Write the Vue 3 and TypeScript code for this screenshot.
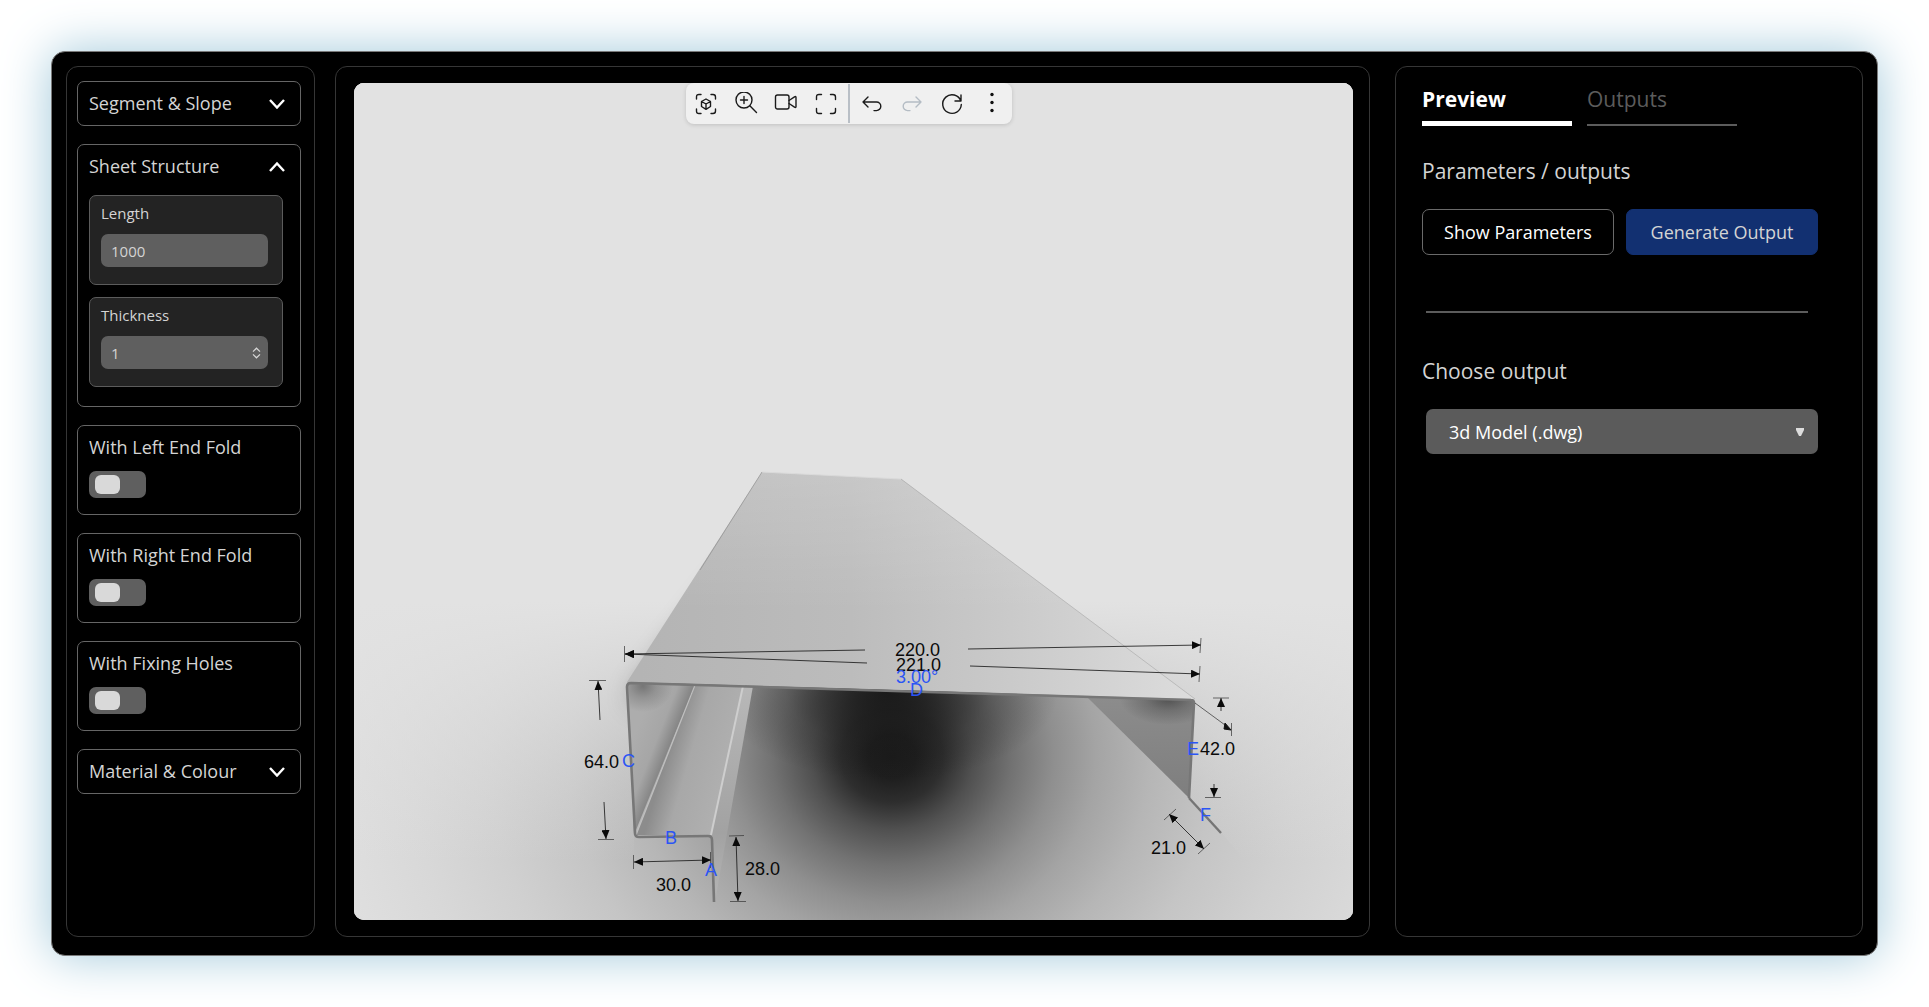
<script setup lang="ts">
import { ref } from 'vue'

interface Fold {
  id: string
  label: string
}

interface DimensionText {
  x: number
  y: number
  text: string
  accent?: boolean
}

const length = ref('1000')
const thickness = ref('1')
const output = ref('3d Model (.dwg)')
const activeTab = ref<'Preview' | 'Outputs'>('Preview')
const tabs = ['Preview', 'Outputs'] as const
const outputs = ['3d Model (.dwg)']

const folds: Fold[] = [
  { id: 'left-fold', label: 'With Left End Fold' },
  { id: 'right-fold', label: 'With Right End Fold' },
  { id: 'fixing-holes', label: 'With Fixing Holes' },
]

const dimensionTexts: DimensionText[] = [
  { x: 895, y: 655, text: '220.0' },
  { x: 896, y: 670, text: '221.0' },
  { x: 896, y: 682, text: '3.00°', accent: true },
  { x: 910, y: 695, text: 'D', accent: true },
  { x: 584, y: 767, text: '64.0' },
  { x: 622, y: 766, text: 'C', accent: true },
  { x: 665, y: 843, text: 'B', accent: true },
  { x: 705, y: 875, text: 'A', accent: true },
  { x: 656, y: 890, text: '30.0' },
  { x: 745, y: 874, text: '28.0' },
  { x: 1187, y: 754, text: 'E', accent: true },
  { x: 1200, y: 754, text: '42.0' },
  { x: 1200, y: 820, text: 'F', accent: true },
  { x: 1151, y: 853, text: '21.0' },
]
</script>

<template>
  <main class="page">
    <div class="frame">
      <aside class="panel sidebar">
        <section class="card">
          <button class="card-head" type="button" aria-expanded="false">
            <span>Segment &amp; Slope</span>
            <svg class="chevron" viewBox="0 0 18 12" aria-hidden="true"><path d="M2 3l7 7.5L16 3" /></svg>
          </button>
        </section>

        <section class="card">
          <button class="card-head" type="button" aria-expanded="true">
            <span>Sheet Structure</span>
            <svg class="chevron" viewBox="0 0 18 12" aria-hidden="true"><path d="M2 11l7-7.5L16 11" /></svg>
          </button>
          <div class="fields">
            <div class="field">
              <label for="length">Length</label>
              <div class="box">
                <input id="length" v-model="length" type="text" inputmode="numeric" />
              </div>
            </div>
            <div class="field">
              <label for="thickness">Thickness</label>
              <div class="box">
                <input id="thickness" v-model="thickness" type="text" inputmode="numeric" />
                <svg class="stepper" viewBox="0 0 9 12" aria-hidden="true">
                  <path d="M1 4.6l3.5-3.4L8 4.6M1 7.4l3.5 3.4L8 7.4" />
                </svg>
              </div>
            </div>
          </div>
        </section>

        <section v-for="fold in folds" :key="fold.id" class="card switch-card">
          <label :for="fold.id">{{ fold.label }}</label>
          <input :id="fold.id" class="switch" type="checkbox" role="switch" />
        </section>

        <section class="card">
          <button class="card-head" type="button" aria-expanded="false">
            <span>Material &amp; Colour</span>
            <svg class="chevron" viewBox="0 0 18 12" aria-hidden="true"><path d="M2 3l7 7.5L16 3" /></svg>
          </button>
        </section>
      </aside>

      <section class="panel stage">
        <div class="viewer">
          <svg class="scene" viewBox="354 82 999 837" role="img" aria-label="Sheet profile">
            <defs>
              <radialGradient id="ground" gradientUnits="userSpaceOnUse" cx="0" cy="0" r="1"
                gradientTransform="translate(892 755) scale(600 545)">
                <stop offset="0" stop-color="#1b1b1b" />
                <stop offset="0.04" stop-color="#1e1e1e" />
                <stop offset="0.085" stop-color="#2e2e2e" />
                <stop offset="0.135" stop-color="#505050" />
                <stop offset="0.2" stop-color="#727272" />
                <stop offset="0.27" stop-color="#8f8f8f" />
                <stop offset="0.34" stop-color="#a4a4a4" />
                <stop offset="0.43" stop-color="#b6b6b6" />
                <stop offset="0.54" stop-color="#c5c5c5" />
                <stop offset="0.67" stop-color="#d0d0d0" />
                <stop offset="0.8" stop-color="#d8d8d8" />
                <stop offset="1" stop-color="#e2e2e2" />
              </radialGradient>
              <radialGradient id="hollow">
                <stop offset="0" stop-color="#161616" stop-opacity="0.9" />
                <stop offset="0.2" stop-color="#161616" stop-opacity="0.72" />
                <stop offset="0.6" stop-color="#161616" stop-opacity="0.25" />
                <stop offset="1" stop-color="#161616" stop-opacity="0" />
              </radialGradient>
              <linearGradient id="clear" gradientUnits="userSpaceOnUse" x1="0" y1="600" x2="0" y2="860">
                <stop offset="0" stop-color="#e2e2e2" />
                <stop offset="1" stop-color="#e2e2e2" stop-opacity="0" />
              </linearGradient>
              <linearGradient id="top" gradientUnits="userSpaceOnUse" x1="640" y1="0" x2="1194" y2="0">
                <stop offset="0" stop-color="#b4b4b4" />
                <stop offset="0.38" stop-color="#bcbcbc" />
                <stop offset="0.65" stop-color="#c9c9c9" />
                <stop offset="1" stop-color="#dcdcdc" />
              </linearGradient>
              <linearGradient id="top-light" gradientUnits="userSpaceOnUse" x1="0" y1="471" x2="0" y2="610">
                <stop offset="0" stop-color="#fff" stop-opacity="0.17" />
                <stop offset="1" stop-color="#fff" stop-opacity="0" />
              </linearGradient>
              <linearGradient id="wall" gradientUnits="userSpaceOnUse" x1="630" y1="745" x2="668" y2="760">
                <stop offset="0" stop-color="#adadad" />
                <stop offset="0.55" stop-color="#a6a6a6" />
                <stop offset="1" stop-color="#7c7c7c" />
              </linearGradient>
              <linearGradient id="base" gradientUnits="userSpaceOnUse" x1="665" y1="760" x2="728" y2="778">
                <stop offset="0" stop-color="#8c8c8c" />
                <stop offset="0.35" stop-color="#a8a8a8" />
                <stop offset="1" stop-color="#b0b0b0" />
              </linearGradient>
              <linearGradient id="lip" gradientUnits="userSpaceOnUse" x1="0" y1="685" x2="0" y2="895">
                <stop offset="0" stop-color="#b8b8b8" />
                <stop offset="0.7" stop-color="#a2a2a2" />
                <stop offset="1" stop-color="#b4b4b4" />
              </linearGradient>
              <linearGradient id="right-face" gradientUnits="userSpaceOnUse" x1="0" y1="697" x2="0" y2="797">
                <stop offset="0" stop-color="#8c8c8c" />
                <stop offset="1" stop-color="#7e7e7e" />
              </linearGradient>
              <radialGradient id="corner">
                <stop offset="0" stop-color="#333" stop-opacity="0.65" />
                <stop offset="0.45" stop-color="#333" stop-opacity="0.3" />
                <stop offset="1" stop-color="#333" stop-opacity="0" />
              </radialGradient>
              <filter id="soft" x="-50%" y="-50%" width="200%" height="200%">
                <feGaussianBlur stdDeviation="14" />
              </filter>
              <marker id="arrow" viewBox="0 0 9 8" refX="9" refY="4" markerWidth="9" markerHeight="8"
                markerUnits="userSpaceOnUse" orient="auto-start-reverse">
                <path d="M0 0l9 4-9 4z" fill="#0a0a0a" />
              </marker>
              <clipPath id="left-clip"><path d="M628 683H695L634 832z" /></clipPath>
              <clipPath id="right-clip"><path d="M1088 697l106 2-5 98z" /></clipPath>
            </defs>

            <!-- floor and its shadow -->
            <rect x="354" y="82" width="999" height="837" fill="#e2e2e2" />
            <rect x="354" y="82" width="999" height="837" fill="url(#ground)" />
            <ellipse cx="888" cy="692" rx="170" ry="88" fill="url(#hollow)" />
            <path d="M354 82H830V475H762L627 682l7 152v85H354z" fill="url(#clear)" />
            <path d="M830 82h523v837h-60l-72-88-32-34 5-98L901 478h-71z" fill="url(#clear)" />
            <path d="M742 560l-112 140h90z" fill="#000" opacity="0.5" filter="url(#soft)" />

            <!-- folded sheet -->
            <path d="M628 683H695L634 834z" fill="url(#wall)" />
            <ellipse cx="643" cy="685" rx="30" ry="26" fill="url(#corner)" opacity="0.7" clip-path="url(#left-clip)" />
            <path d="M695 684h50l-34 150h-75z" fill="url(#base)" />
            <path d="M695 684L636 834" stroke="#c0c0c0" stroke-width="1.2" />
            <path d="M743 685h10l-37 210-5-60z" fill="url(#lip)" />
            <path d="M743 685l-32 149" stroke="#cecece" stroke-width="2" />
            <path d="M1088 697l106 2-5 98z" fill="url(#right-face)" />
            <ellipse cx="1168" cy="698" rx="48" ry="26" fill="url(#corner)" clip-path="url(#right-clip)" />
            <path d="M762 471l139 7 294 220-568-17z" fill="url(#top)" />
            <path d="M762 471l139 7 294 220-568-17z" fill="url(#top-light)" />
            <path d="M901 478l294 220" stroke="#adadad" stroke-width="0.7" />
            <path d="M762 471l-62 98" stroke="#8f8f8f" stroke-width="0.7" />
            <path d="M762 471l139 7" stroke="#dadada" stroke-width="1" />
            <g fill="none" stroke-linejoin="round">
              <path d="M714 901l-2-62q0-4-4-4l-69 1q-4 0-4-4l-8-146q0-4 4-4l560 17q3 0 3 3l-5 95" stroke="#777" stroke-width="2.6" />
              <path d="M1189 797l32 35" stroke="#757575" stroke-width="2.4" />
            </g>

            <!-- dimension lines -->
            <g stroke="#111" stroke-width="1" fill="none">
              <g stroke-width="0.8">
                <path d="M625 653l240-4" marker-start="url(#arrow)" />
                <path d="M625 653l242 9" marker-start="url(#arrow)" />
                <path d="M968 648l233-4" marker-end="url(#arrow)" />
                <path d="M970 665l230 8" marker-end="url(#arrow)" />
                <path d="M598 680l2 39" marker-start="url(#arrow)" />
                <path d="M604 801l2 37" marker-end="url(#arrow)" />
                <path d="M634 861l77-2" marker-start="url(#arrow)" marker-end="url(#arrow)" />
                <path d="M736 836l2 64" marker-start="url(#arrow)" marker-end="url(#arrow)" />
                <path d="M1221 697v13" marker-start="url(#arrow)" />
                <path d="M1214 783v13" marker-end="url(#arrow)" />
                <path d="M1169 813l35 35" marker-start="url(#arrow)" marker-end="url(#arrow)" />
              </g>
              <path d="M1195 702l30 22" stroke-width="0.6" />
              <path d="M1231 729l-6-7-1 6z" fill="#111" />
              <path
                d="M624.5 645v16M1201 637l-1 15M1200 665l-1 16M589 679.500h17M598 838.500h16M633.500 854v14M710.500 851v16M729 835l15-.5M730 900.500h16M1213 697h16M1205 796.500h16M1231.500 722v13M1164 819l12-11M1198 853l12-11"
                stroke-width="0.7" stroke="#333" />
            </g>

            <g class="dims">
              <text v-for="item in dimensionTexts" :key="item.text" :x="item.x" :y="item.y"
                :class="{ accent: item.accent }">{{ item.text }}</text>
            </g>
          </svg>

          <div class="toolbar-layer">
            <div class="toolbar" role="toolbar" aria-label="View controls">
              <button type="button" aria-label="Fit model">
                <svg viewBox="0 0 24 24"><path d="M2.500 7V5Q2.500 2.500 5 2.500H7M17 2.500H19Q21.500 2.500 21.500 5V7M21.500 17V19Q21.500 21.500 19 21.500H17M7 21.500H5Q2.500 21.500 2.500 19V17M12 7l4.500 2.500v5L12 17.300l-4.500-2.800v-5zM7.500 9.500L12 12l4.500-2.500M12 12v5" /></svg>
              </button>
              <button type="button" aria-label="Zoom in">
                <svg viewBox="0 0 24 24"><circle cx="10" cy="8" r="8" /><path d="M15.800 13.800L22.500 20.500M10 4.500v7M6.500 8h7" /></svg>
              </button>
              <button type="button" aria-label="Camera">
                <svg viewBox="0 0 24 24"><rect x="1.500" y="3" width="13.500" height="14" rx="2" /><path d="M15 8.500L20.500 4.800Q22 4 22 5.600V14.400Q22 16 20.500 15.200L15 11.500" /></svg>
              </button>
              <button type="button" aria-label="Full screen">
                <svg viewBox="0 0 24 24"><path d="M2.500 7.500V5Q2.500 2.500 5 2.500H7.500M16.500 2.500H19Q21.500 2.500 21.500 5V7.500M21.500 16.500V19Q21.500 21.500 19 21.500H16.500M7.500 21.500H5Q2.500 21.500 2.500 19V16.500" /></svg>
              </button>
              <span class="rule"></span>
              <button type="button" aria-label="Undo">
                <svg viewBox="0 0 24 24"><path d="M8 5L3 10l5 5M3 10h13.500a4.300 4.300 0 0 1 0 8.600H14" /></svg>
              </button>
              <button class="muted" type="button" aria-label="Redo" disabled>
                <svg viewBox="0 0 24 24"><path d="M16 5l5 5-5 5M21 10H7.500a4.300 4.300 0 0 0 0 8.600H10" /></svg>
              </button>
              <button type="button" aria-label="Reset">
                <svg viewBox="0 0 24 24"><path d="M20.800 9A9.300 9.300 0 1 0 21.300 12.500M21 3v6h-6" /></svg>
              </button>
              <button type="button" aria-label="More">
                <svg viewBox="0 0 24 24"><g class="dot"><circle cx="12" cy="2.500" r="1.700" /><circle cx="12" cy="10.500" r="1.700" /><circle cx="12" cy="18.500" r="1.700" /></g></svg>
              </button>
            </div>
          </div>
        </div>
      </section>

      <aside class="panel details">
        <div class="tabs" role="tablist">
          <button v-for="tab in tabs" :key="tab" class="tab" type="button" role="tab"
            :aria-selected="tab === activeTab" @click="activeTab = tab">{{ tab }}</button>
        </div>
        <h2>Parameters / outputs</h2>
        <div class="actions">
          <button class="action" type="button">Show Parameters</button>
          <button class="action primary" type="button">Generate Output</button>
        </div>
        <hr />
        <h2><label for="output">Choose output</label></h2>
        <div class="select">
          <select id="output" v-model="output">
            <option v-for="item in outputs" :key="item">{{ item }}</option>
          </select>
          <svg viewBox="0 0 8 8" aria-hidden="true"><path d="M0 0h8v2L5 8H3L0 2z" /></svg>
        </div>
      </aside>
    </div>
  </main>
</template>

<style>
body {
  background: #fff;
}
</style>

<style scoped>
* {
  box-sizing: border-box;
}

.page {
  padding: 51px;
  font-family: 'Open Sans', sans-serif;
  color: #d4d4d4;
}

button,
input,
select {
  font: inherit;
  color: inherit;
  margin: 0;
}

.frame {
  display: grid;
  grid-template-columns: 249px minmax(0, 1fr) 473px;
  column-gap: 20px;
  padding: 14px 14px 18px;
  background: #000;
  border: 1px solid #7a7a7a;
  border-radius: 14px;
  box-shadow: 0 0 50px #a0c8da;
}

.panel {
  border: 1px solid #363636;
  border-radius: 12px;
}

.sidebar {
  display: flex;
  flex-direction: column;
  gap: 18px;
  padding: 14px 13px 14px 10px;
}

.card {
  border: 1px solid #666;
  border-radius: 7px;
  font-size: 18px;
  line-height: 24px;
}

.card-head {
  display: flex;
  align-items: center;
  justify-content: space-between;
  width: 100%;
  height: 43px;
  padding: 0 14px 2px 11px;
  background: none;
  border: 0;
}

.chevron {
  width: 18px;
  height: 12px;
  fill: none;
  stroke: #fff;
  stroke-width: 2.4;
}

.fields {
  display: flex;
  flex-direction: column;
  gap: 12px;
  padding: 7px 17px 19px 11px;
}

.field {
  height: 90px;
  padding: 7px 14px 0 11px;
  background: #232323;
  border: 1px solid #5c5c5c;
  border-radius: 7px;
  font-size: 15px;
  line-height: 20px;
}

.field label {
  display: block;
}

.box {
  display: flex;
  align-items: center;
  height: 33px;
  margin-top: 11px;
  padding: 0 7px 0 10px;
  background: #5f5f5f;
  border-radius: 7px;
}

.box input {
  flex: 1;
  min-width: 0;
  padding: 0;
  background: none;
  border: 0;
  outline: 0;
}

.stepper {
  width: 9px;
  height: 12px;
  fill: none;
  stroke: #d8d8d8;
  stroke-width: 1.2;
}

.switch-card {
  height: 90px;
  padding: 9px 11px;
}

.switch-card label {
  display: block;
}

.switch {
  appearance: none;
  display: block;
  width: 57px;
  height: 27px;
  margin-top: 12px;
  padding: 4px 6px;
  background: #5f5f5f;
  border-radius: 7px;
}

.switch::before {
  content: '';
  display: block;
  width: 25px;
  height: 19px;
  background: #d9d9d9;
  border-radius: 6px;
}

.switch:checked::before {
  margin-left: auto;
}

.stage {
  padding: 16px 16px 16px 18px;
}

.viewer {
  position: relative;
  overflow: hidden;
  background: #e2e2e2;
  border-radius: 10px;
}

.scene {
  display: block;
  width: 100%;
  height: auto;
}

.dims {
  font-family: 'Liberation Sans', Arial, sans-serif;
  font-size: 18px;
  fill: #0a0a0a;
}

.dims .accent {
  fill: #2b55f5;
}

.toolbar-layer {
  position: absolute;
  inset: 0 9px auto 0;
  display: flex;
  justify-content: center;
}

.toolbar {
  display: flex;
  height: 41px;
  padding-top: 1px;
  background: #f0f0f0;
  border-radius: 8px;
  box-shadow: 0 1px 4px rgb(0 0 0 / 15%);
}

.toolbar button {
  display: grid;
  place-items: center;
  width: 40px;
  height: 40px;
  padding: 0;
  background: none;
  border: 0;
}

.toolbar svg {
  width: 24px;
  height: 24px;
  fill: none;
  stroke: #1a1a1a;
  stroke-width: 1.4;
  stroke-linecap: round;
  stroke-linejoin: round;
}

.toolbar .muted svg {
  stroke: #b4bcc4;
}

.toolbar .dot {
  fill: #111;
  stroke: none;
}

.rule {
  width: 2px;
  height: 39px;
  margin: 0 2px;
  background: #b9bfc6;
}

.details {
  margin-left: 5px;
  padding: 16px 44px 16px 26px;
}

.tabs {
  display: flex;
  gap: 15px;
}

.tab {
  width: 150px;
  height: 43px;
  padding: 0 0 10px;
  background: none;
  border: 0;
  border-bottom: 2px solid #5c5c5c;
  color: #5c5c5c;
  font-size: 21px;
  line-height: 28px;
  text-align: left;
}

.tab[aria-selected='true'] {
  padding-bottom: 7px;
  border-bottom: 5px solid #fff;
  color: #fff;
  font-weight: 700;
}

h2 {
  margin: 31px 0 0;
  font-size: 21px;
  font-weight: 400;
  line-height: 28px;
}

.actions {
  display: flex;
  gap: 12px;
  margin-top: 24px;
}

.action {
  flex: 1;
  height: 46px;
  padding: 0;
  background: #000;
  border: 1px solid #6a6a6a;
  border-radius: 7px;
  color: #fff;
  font-size: 18px;
}

.primary {
  background: #123071;
  border-color: #123071;
  color: #d4d4d4;
}

hr {
  height: 2px;
  margin: 56px 10px 44px 4px;
  background: #5c5c5c;
  border: 0;
}

.select {
  position: relative;
  margin: 24px 0 0 4px;
}

.select select {
  appearance: none;
  width: 100%;
  height: 45px;
  padding: 0 36px 0 23px;
  background: #5b5b5b;
  border: 0;
  border-radius: 7px;
  color: #fff;
  font-size: 18px;
}

.select svg {
  position: absolute;
  top: 19px;
  right: 14px;
  width: 8px;
  height: 8px;
  fill: #dcdcdc;
  pointer-events: none;
}
</style>
